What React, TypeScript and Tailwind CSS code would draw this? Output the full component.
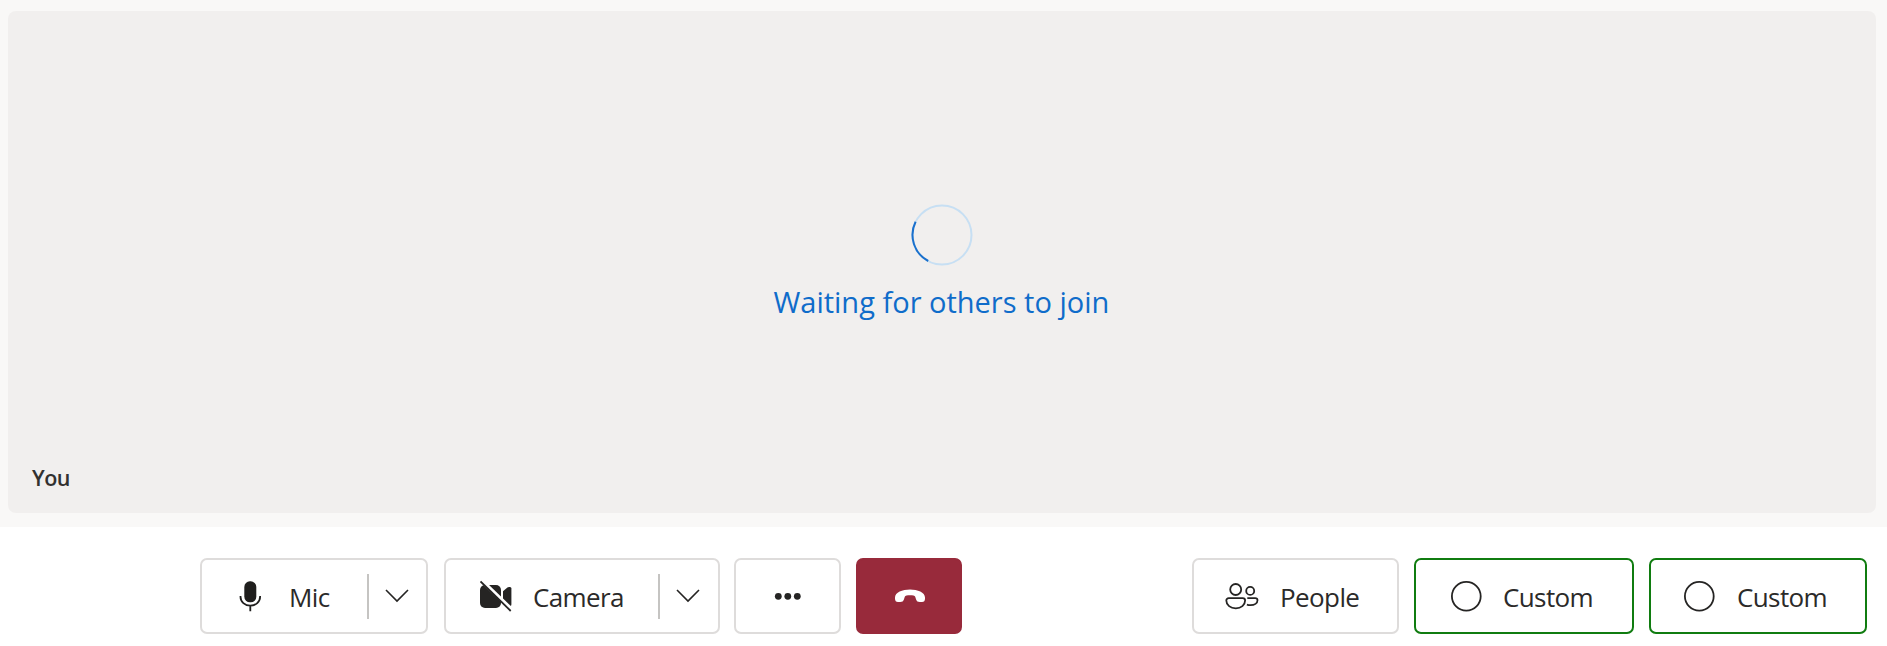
import type { ReactNode } from "react";

const ink = "#252423";

function Label({ children, className }: { children: ReactNode; className: string }) {
  return (
    <span className={`block shrink-0 whitespace-nowrap pt-0.5 text-[26px] leading-9 tracking-[-0.6px] text-[#2b2a29] ${className}`}>
      {children}
    </span>
  );
}

function Control({ children, className }: { children: ReactNode; className: string }) {
  return (
    <button
      type="button"
      className={`flex h-[76px] shrink-0 items-center rounded-[7px] border-2 text-left ${className}`}
    >
      {children}
    </button>
  );
}

function SplitEnd({ className }: { className: string }) {
  return (
    <span className={`ml-auto flex h-[45px] items-center border-l-2 border-[#c5c4c2] pl-4 ${className}`}>
      <svg width="24" height="14" viewBox="0 0 24 14" fill="none" stroke={ink} strokeWidth="1.6">
        <path d="M1 1 12 12 23 1" />
      </svg>
    </span>
  );
}

function MicIcon() {
  return (
    <svg className="ml-[37px] shrink-0" width="22" height="32" viewBox="0 0 22 32" fill="none">
      <rect x="5.3" y="1.3" width="12" height="21" rx="5.6" fill="#1f1e1d" />
      <path d="M1.5 16v.7c0 5.1 4.3 9 9.8 9s9.8-3.9 9.8-9V16M11.3 25.3v6" stroke="#1f1e1d" strokeWidth="1.8" />
    </svg>
  );
}

function CameraOffIcon() {
  return (
    <svg className="ml-[34px] shrink-0" width="32" height="32" viewBox="0 0 32 32" fill={ink}>
      <rect x="0" y="5" width="21" height="23" rx="5" />
      <path d="M23 11.2 27.4 7.6Q28.2 7 29 7h1q1.4 0 1.4 1.5v16q0 1.5-1.4 1.5h-1q-.8 0-1.6-.6L23 22Z" />
      <path d="M0 1 31 31" stroke="white" strokeWidth="4" transform="translate(1 -1)" />
      <path d="M.5 1.5 30.7 31" stroke={ink} strokeWidth="1.8" />
    </svg>
  );
}

function PeopleIcon() {
  return (
    <svg className="ml-[31px] shrink-0" width="34" height="28" viewBox="0 0 34 28" fill="none" stroke={ink} strokeWidth="1.8">
      <circle cx="10.7" cy="7.5" r="5.5" />
      <circle cx="25.2" cy="8.9" r="4" />
      <path d="M3.7 16.1h14a2.4 2.4 0 0 1 2.4 2.4c0 4.5-4 7.8-9.3 7.8s-9.5-3.3-9.5-7.8a2.4 2.4 0 0 1 2.4-2.4Z" />
      <path d="M22.3 16.1h7.8c1.5 0 2.4.8 2.4 2.1 0 3-3 5-7 5-1.2 0-2.5-.2-3.6-.6" />
    </svg>
  );
}

function CircleIcon({ className }: { className: string }) {
  return (
    <svg className={`shrink-0 ${className}`} width="32" height="32" viewBox="0 0 32 32" fill="none">
      <circle cx="16.3" cy="16.3" r="14.4" stroke={ink} strokeWidth="1.8" />
    </svg>
  );
}

export default function App() {
  return (
    <div className="flex h-[646px] w-[1887px] flex-col overflow-hidden bg-white font-['Open_Sans','Noto_Sans',sans-serif]">
      <main className="flex h-[527px] bg-[#f9f8f7] pt-[11px] pl-2">
        <section className="flex h-[502px] w-[1868px] flex-col rounded-lg bg-[#f1efee]">
          <div className="flex flex-col items-center pt-[192px]">
            <svg width="64" height="64" viewBox="0 0 64 64" fill="none">
              <circle cx="32" cy="32" r="29.5" stroke="#c7dff3" strokeWidth="2" />
              <path d="M5.6 18.8A29.5 29.5 0 0 0 18.2 58" stroke="#1a70cc" strokeWidth="2" />
            </svg>
            <p className="mt-[15px] h-10 w-[337px] whitespace-nowrap text-[29px] leading-10 text-[#0f6cca]">
              Waiting for others to join
            </p>
          </div>
          <div className="mt-auto mb-[19px] ml-6 text-[21.5px] leading-8 font-semibold tracking-[-0.5px] text-[#323130]">
            You
          </div>
        </section>
      </main>
      <footer className="flex h-[119px] items-start justify-between pt-[31px] pr-5 pl-[200px]">
        <div className="flex">
          <Control className="w-[228px] border-[#dedcdb] bg-white">
            <MicIcon />
            <Label className="ml-[28px]">Mic</Label>
            <SplitEnd className="w-[59px]" />
          </Control>
          <Control className="ml-4 w-[276px] border-[#dedcdb] bg-white">
            <CameraOffIcon />
            <Label className="ml-[21px]">Camera</Label>
            <SplitEnd className="w-[60px]" />
          </Control>
          <Control className="ml-[14px] w-[107px] justify-center border-[#dedcdb] bg-white">
            <svg width="30" height="8" viewBox="0 0 30 8" fill={ink}>
              <circle cx="5.3" cy="4.3" r="3.4" />
              <circle cx="14.8" cy="4.3" r="3.4" />
              <circle cx="24.3" cy="4.3" r="3.4" />
            </svg>
          </Control>
          <Control className="ml-[15px] w-[106px] justify-center border-[#982a3b] bg-[#982a3b]">
            <svg className="ml-0.5" width="32" height="14" viewBox="0 0 32 14" fill="white">
              <path d="M16 .5C8.5.5 1 3.2 1 8.5v1.2c0 2 1 3.3 3 3.3h2.2c2 0 3.2-.8 3.7-2.5l.9-2.7c.4-1.2 2.5-1.6 5.2-1.6s4.8.4 5.2 1.6l.9 2.7c.5 1.7 1.7 2.5 3.7 2.5H28c2 0 3-1.3 3-3.3V8.5C31 3.2 23.5.5 16 .5Z" />
            </svg>
          </Control>
        </div>
        <div className="flex">
          <Control className="w-[207px] border-[#dedcdb] bg-white">
            <PeopleIcon />
            <Label className="ml-[21px]">People</Label>
          </Control>
          <Control className="ml-[15px] w-[220px] border-[#107c10] bg-white">
            <CircleIcon className="ml-[34px]" />
            <Label className="ml-[21px]">Custom</Label>
          </Control>
          <Control className="ml-[15px] w-[218px] border-[#107c10] bg-white">
            <CircleIcon className="ml-[32px]" />
            <Label className="ml-[22px]">Custom</Label>
          </Control>
        </div>
      </footer>
    </div>
  );
}
